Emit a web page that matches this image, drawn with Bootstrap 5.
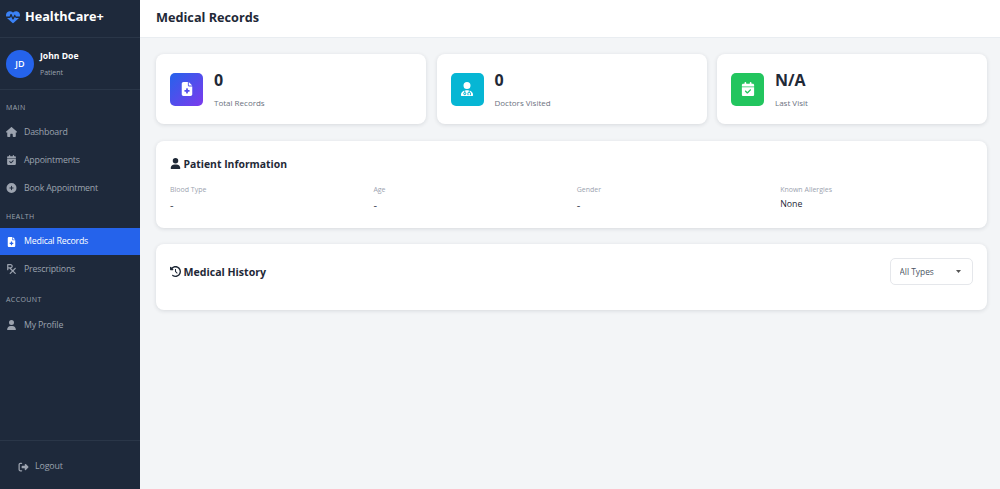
<!DOCTYPE html>
<html lang="en">
<head>
<meta charset="utf-8">
<title>Medical Records</title>
<link rel="stylesheet" href="https://cdn.jsdelivr.net/npm/bootstrap@5.3.0/dist/css/bootstrap.min.css">
<style>
html,body{height:100%;}
body{font-family:"Open Sans","Noto Sans",sans-serif;background:#f3f5f7;color:#1f2937;overflow:hidden;}
.shell{height:489px;}
.side{width:140px;background:#1e293b;flex:none;}
.brand{height:38px;padding:0 6px 3px;border-bottom:1px solid #2a3648;color:#fff;font-size:12.7px;font-weight:700;gap:5px;}
.brand svg{width:14px;height:14px;fill:#3b82f6;}
.who{height:52px;padding:0 6px;border-bottom:1px solid #2a3648;gap:6px;}
.avatar{width:28px;height:28px;border-radius:50%;background:#2563eb;color:#fff;font-size:9px;font-weight:600;}
.who-name{font-size:8.6px;font-weight:700;color:#fff;line-height:13px;}
.who-role{font-size:7px;color:#9ca3af;line-height:10px;margin-top:5px;}
.sect{font-size:7px;letter-spacing:.4px;color:#9ca3af;text-transform:uppercase;padding:0 6px;line-height:11px;}
.s1{margin-top:12px;margin-bottom:5px;}
.s2{margin-top:9px;margin-bottom:6px;}
.s3{margin-top:11px;margin-bottom:6px;}
.link{height:28px;padding:0 6px;gap:7px;color:#9ca3af;font-size:8.8px;letter-spacing:-.2px;text-decoration:none;}
.link span{padding-top:1px;}
.link svg,.out svg{width:11px;height:10px;fill:#9ca3af;flex:none;}
.link.on{background:#2563eb;color:#fff;height:27px;}
.link.on svg{fill:#fff;}
.foot{height:49px;border-top:1px solid #2a3648;padding:4px 0 0 18px;}
.out{gap:6px;color:#9ca3af;font-size:8.8px;letter-spacing:-.1px;text-decoration:none;}
.top{height:38px;background:#fff;border-bottom:1px solid #e9edf1;padding:0 16px 2px;flex:none;}
.top h1{font-size:12.7px;font-weight:700;margin:0;color:#1f2937;}
.body-area{padding:16px 13px 16px 16px;gap:16.5px;}
.stats{display:grid;grid-template-columns:repeat(3,1fr);gap:10.5px;}
.panel{background:#fff;border-radius:8px;box-shadow:0 1px 4px rgba(15,23,42,.12);}
.stat{height:70px;padding:0 14px;gap:11px;}
.tile{width:33px;height:33px;border-radius:5px;flex:none;}
.tile svg{width:14px;height:14px;fill:#fff;}
.t1{background:linear-gradient(135deg,#2563eb,#7c3aed);}
.t2{background:#06b6d4;}
.t3{background:#22c55e;}
.num{font-size:16px;font-weight:700;line-height:22px;color:#1f2937;}
.cap{font-size:8px;color:#6b7280;line-height:12px;margin-top:6px;}
.info{height:87px;padding:0 14px;}
.ttl{font-size:10.4px;font-weight:700;margin:0;color:#1f2937;line-height:16px;gap:2.500px;}
.ttl svg{width:11px;height:11px;fill:#1f2937;}
.fields{display:grid;grid-template-columns:repeat(4,1fr);gap:10.5px;margin-top:12px;}
.lab{font-size:7px;color:#9ca3af;line-height:11px;}
.val{font-size:8.8px;color:#1f2937;line-height:13px;margin-top:3px;}
.val.dash{font-size:11px;line-height:16px;margin-top:2px;color:#374151;}
.hist{height:66px;padding:14px 14px 0;}
.hist .ttl{height:27px;font-size:10.6px;}
.typesel{width:83px;height:27px;padding:2px 20px 0 8.500px;font-size:8.4px;color:#4b5563;border:1px solid #e5e7eb;border-radius:5px;background-size:5px 3px;background-position:right 11px center;background-repeat:no-repeat;background-color:#fff;background-image:url("data:image/svg+xml,%3Csvg xmlns='http://www.w3.org/2000/svg' viewBox='0 0 5 3'%3E%3Cpath d='M0 0h5L2.500 3z' fill='%23555'/%3E%3C/svg%3E");font-family:inherit;}
</style>
</head>
<body>
<svg width="0" height="0" class="position-absolute">
<symbol id="i-heart" viewBox="0 0 512 512"><path d="M228.3 469.1L47.6 300.4c-4.2-3.9-8.2-8.1-11.9-12.4h87c22.6 0 43-13.6 51.7-34.5l10.5-25.2 49.3 109.5c3.8 8.5 12.1 14 21.4 14.1s17.8-5 22-13.3L320 253.7l1.700 3.400c9.500 19 28.900 31 50.100 31H476.300c-3.700 4.300-7.700 8.500-11.900 12.400L283.700 469.100c-7.500 7-17.400 10.900-27.700 10.900s-20.200-3.900-27.700-10.900zM503.700 240h-132c-3 0-5.800-1.700-7.200-4.400l-23.200-46.300c-4.100-8.100-12.400-13.300-21.500-13.300s-17.400 5.100-21.500 13.300l-41.400 82.800L205.900 158.200c-3.900-8.700-12.700-14.300-22.200-14.100s-18.100 5.900-21.800 14.800l-31.800 76.300c-1.200 3-4.200 4.900-7.400 4.900H16c-2.600 0-5 .4-7.300 1.100C3 225.200 0 208.200 0 190.900v-5.800c0-69.900 50.500-129.500 119.400-141C165 36.500 211.400 51.400 244 84l12 12 12-12c32.600-32.600 79-47.500 124.600-39.900C461.500 55.600 512 115.200 512 185.100v5.800c0 16.900-2.800 33.500-8.300 49.100z"/></symbol>
<symbol id="i-house" viewBox="0 0 576 512"><path d="M575.800 255.500c0 18-15 32.100-32 32.100h-32l.7 160.200c0 2.700-.2 5.400-.5 8.100V472c0 22.100-17.900 40-40 40H456c-1.100 0-2.200 0-3.300-.1c-1.400 .1-2.800 .1-4.200 .1H416 392c-22.100 0-40-17.900-40-40V448 384c0-17.700-14.300-32-32-32H256c-17.700 0-32 14.300-32 32v64 24c0 22.100-17.900 40-40 40H160 128.100c-1.500 0-3-.1-4.500-.2c-1.200 .1-2.400 .2-3.600 .2H104c-22.100 0-40-17.900-40-40V360c0-.9 0-1.900 .1-2.800V287.600H32c-18 0-32-14-32-32.100c0-9 3-17 10-24L266.400 8c7-7 15-8 22-8s15 2 21 7L564.800 231.500c8 7 12 15 11 24z"/></symbol>
<symbol id="i-cal" viewBox="0 0 448 512"><path d="M128 0c17.700 0 32 14.300 32 32V64H288V32c0-17.700 14.300-32 32-32s32 14.300 32 32V64h48c26.500 0 48 21.500 48 48v48H0V112C0 85.500 21.500 64 48 64H96V32c0-17.700 14.300-32 32-32zM0 192H448V464c0 26.500-21.500 48-48 48H48c-26.500 0-48-21.500-48-48V192zM329 305c9.400-9.400 9.400-24.600 0-33.900s-24.600-9.400-33.900 0l-95 95-47-47c-9.400-9.400-24.600-9.400-33.900 0s-9.400 24.600 0 33.900l64 64c9.400 9.400 24.600 9.400 33.900 0L329 305z"/></symbol>
<symbol id="i-plus" viewBox="0 0 512 512"><path d="M256 512A256 256 0 1 0 256 0a256 256 0 1 0 0 512zM232 344V280H168c-13.300 0-24-10.700-24-24s10.700-24 24-24h64V168c0-13.300 10.700-24 24-24s24 10.700 24 24v64h64c13.300 0 24 10.700 24 24s-10.700 24-24 24H280v64c0 13.300-10.700 24-24 24s-24-10.700-24-24z"/></symbol>
<symbol id="i-file" viewBox="0 0 384 512"><path d="M64 0C28.700 0 0 28.700 0 64V448c0 35.300 28.700 64 64 64H320c35.300 0 64-28.700 64-64V160H256c-17.700 0-32-14.300-32-32V0H64zM256 0V128H384L256 0zM160 240c0-8.800 7.200-16 16-16h32c8.800 0 16 7.200 16 16v48h48c8.800 0 16 7.200 16 16v32c0 8.800-7.200 16-16 16H224v48c0 8.800-7.200 16-16 16H176c-8.800 0-16-7.200-16-16V352H112c-8.800 0-16-7.200-16-16V304c0-8.800 7.200-16 16-16h48V240z"/></symbol>
<symbol id="i-rx" viewBox="0 0 448 512"><path d="M32 0C14.300 0 0 14.300 0 32V192v96c0 17.700 14.300 32 32 32s32-14.300 32-32V224h50.700l128 128L137.400 457.400c-12.500 12.500-12.500 32.800 0 45.300s32.800 12.500 45.300 0L288 397.300 393.400 502.600c12.500 12.500 32.800 12.500 45.300 0s12.500-32.800 0-45.300L333.300 352 438.600 246.600c12.500-12.500 12.500-32.800 0-45.300s-32.800-12.500-45.300 0L288 306.700 202.100 220.800C249 207.700 288 167.500 288 112C288 50.100 237.900 0 176 0H32zM176 160H64V64H176c26.500 0 48 21.500 48 48s-21.500 48-48 48z"/></symbol>
<symbol id="i-user" viewBox="0 0 448 512"><path d="M224 256A128 128 0 1 0 224 0a128 128 0 1 0 0 256zm-45.700 48C79.800 304 0 383.800 0 482.300C0 498.700 13.300 512 29.700 512H418.300c16.400 0 29.700-13.300 29.700-29.700C448 383.800 368.200 304 269.700 304H178.300z"/></symbol>
<symbol id="i-out" viewBox="0 0 512 512"><path d="M377.900 105.900L500.700 228.700c7.200 7.200 11.300 17.100 11.300 27.300s-4.100 20.100-11.300 27.300L377.900 406.100c-6.400 6.400-15 9.900-24 9.900c-18.700 0-33.900-15.200-33.900-33.900l0-62.100-128 0c-17.700 0-32-14.300-32-32l0-64c0-17.700 14.300-32 32-32l128 0 0-62.100c0-18.700 15.200-33.900 33.900-33.900c9 0 17.600 3.600 24 9.900zM160 96L96 96c-17.700 0-32 14.300-32 32l0 256c0 17.700 14.300 32 32 32l64 0c17.700 0 32 14.300 32 32s-14.300 32-32 32l-64 0c-53 0-96-43-96-96L0 128C0 75 43 32 96 32l64 0c17.700 0 32 14.300 32 32s-14.300 32-32 32z"/></symbol>
<symbol id="i-hist" viewBox="0 0 512 512"><path d="M75 75L41 41C25.900 25.900 0 36.600 0 57.900V168c0 13.300 10.700 24 24 24H134.100c21.400 0 32.100-25.900 17-41l-30.800-30.800C155 85.500 203 64 256 64c106 0 192 86 192 192s-86 192-192 192c-40.800 0-78.600-12.700-109.700-34.400c-14.500-10.100-34.400-6.600-44.600 7.900s-6.600 34.400 7.900 44.600C151.200 495 201.700 512 256 512c141.400 0 256-114.600 256-256S397.400 0 256 0C185.300 0 121.300 28.700 75 75zm181 53c-13.300 0-24 10.700-24 24V256c0 6.400 2.500 12.500 7 17l72 72c9.400 9.400 24.600 9.400 33.900 0s9.400-24.600 0-33.900l-65-65V152c0-13.300-10.700-24-24-24z"/></symbol>
<symbol id="i-doc" viewBox="0 0 448 512"><path d="M224 256A128 128 0 1 0 224 0a128 128 0 1 0 0 256zm-96 55.200C54 332.900 0 401.300 0 482.300C0 498.700 13.300 512 29.700 512H418.300c16.400 0 29.700-13.300 29.700-29.700c0-81-54-149.400-128-171.100V362c27.600 7.100 48 32.200 48 62v40c0 8.800-7.200 16-16 16H336c-8.800 0-16-7.200-16-16s7.200-16 16-16V424c0-17.700-14.300-32-32-32s-32 14.300-32 32v24c8.800 0 16 7.200 16 16s-7.200 16-16 16H256c-8.800 0-16-7.200-16-16V424c0-29.800 20.400-54.900 48-62V304.900c-6-.6-12.100-.9-18.300-.9H178.300c-6.200 0-12.300 .3-18.300 .9v65.400c23.100 6.900 40 28.300 40 53.700c0 30.900-25.100 56-56 56s-56-25.100-56-56c0-25.400 16.900-46.800 40-53.700V311.200zM144 448a24 24 0 1 0 0-48 24 24 0 1 0 0 48z"/></symbol>
</svg>
<div class="shell d-flex">
  <aside class="side d-flex flex-column">
    <div class="brand d-flex align-items-center"><svg><use href="#i-heart"/></svg><span>HealthCare+</span></div>
    <div class="who d-flex align-items-center">
      <div class="avatar d-flex align-items-center justify-content-center">JD</div>
      <div><div class="who-name">John Doe</div><div class="who-role">Patient</div></div>
    </div>
    <nav class="d-flex flex-column flex-grow-1">
      <div class="sect s1">Main</div>
      <a class="link d-flex align-items-center" href="#"><svg><use href="#i-house"/></svg><span>Dashboard</span></a>
      <a class="link d-flex align-items-center" href="#"><svg><use href="#i-cal"/></svg><span>Appointments</span></a>
      <a class="link d-flex align-items-center" href="#"><svg><use href="#i-plus"/></svg><span>Book Appointment</span></a>
      <div class="sect s2">Health</div>
      <a class="link on d-flex align-items-center" href="#"><svg><use href="#i-file"/></svg><span>Medical Records</span></a>
      <a class="link d-flex align-items-center" href="#"><svg><use href="#i-rx"/></svg><span>Prescriptions</span></a>
      <div class="sect s3">Account</div>
      <a class="link d-flex align-items-center" href="#"><svg><use href="#i-user"/></svg><span>My Profile</span></a>
    </nav>
    <div class="foot d-flex align-items-center"><a class="out d-flex align-items-center" href="#"><svg><use href="#i-out"/></svg>Logout</a></div>
  </aside>
  <main class="flex-grow-1 d-flex flex-column">
    <header class="top d-flex align-items-center"><h1>Medical Records</h1></header>
    <div class="body-area d-flex flex-column">
      <div class="stats">
        <div class="panel stat d-flex align-items-center">
          <div class="tile t1 d-flex align-items-center justify-content-center"><svg><use href="#i-file"/></svg></div>
          <div><div class="num">0</div><div class="cap">Total Records</div></div>
        </div>
        <div class="panel stat d-flex align-items-center">
          <div class="tile t2 d-flex align-items-center justify-content-center"><svg><use href="#i-doc"/></svg></div>
          <div><div class="num">0</div><div class="cap">Doctors Visited</div></div>
        </div>
        <div class="panel stat d-flex align-items-center">
          <div class="tile t3 d-flex align-items-center justify-content-center"><svg><use href="#i-cal"/></svg></div>
          <div><div class="num">N/A</div><div class="cap">Last Visit</div></div>
        </div>
      </div>
      <section class="panel info d-flex flex-column justify-content-center">
        <h2 class="ttl d-flex align-items-center"><svg><use href="#i-user"/></svg>Patient Information</h2>
        <div class="fields">
          <div><div class="lab">Blood Type</div><div class="val dash">-</div></div>
          <div><div class="lab">Age</div><div class="val dash">-</div></div>
          <div><div class="lab">Gender</div><div class="val dash">-</div></div>
          <div><div class="lab">Known Allergies</div><div class="val">None</div></div>
        </div>
      </section>
      <section class="panel hist d-flex align-items-start justify-content-between">
        <h2 class="ttl d-flex align-items-center"><svg><use href="#i-hist"/></svg>Medical History</h2>
        <select class="typesel form-select"><option>All Types</option></select>
      </section>
    </div>
  </main>
</div>
<script src="https://cdn.jsdelivr.net/npm/bootstrap@5.3.0/dist/js/bootstrap.bundle.min.js"></script>
</body>
</html>
